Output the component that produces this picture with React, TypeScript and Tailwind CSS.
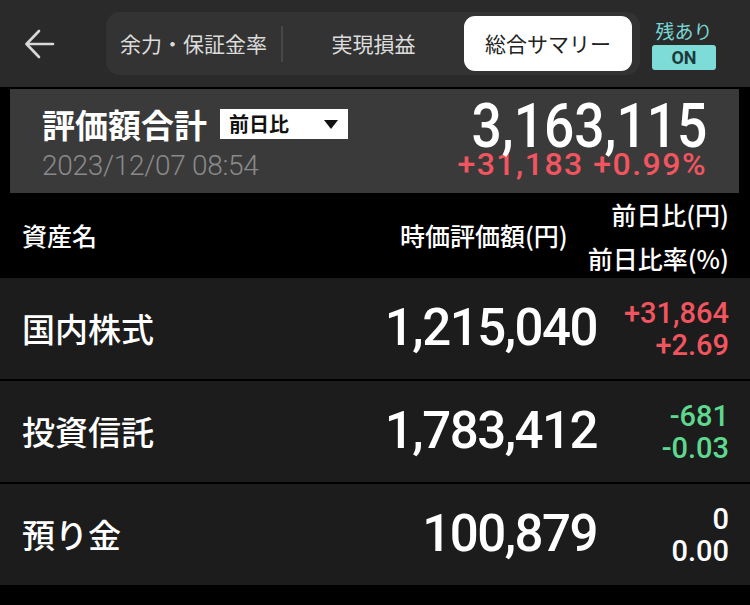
const tabs = ["余力・保証金率", "実現損益", "総合サマリー"];

type Asset = {
  name: string;
  value: string;
  diff: string;
  rate: string;
  tone: "up" | "down" | "flat";
};

const assets: Asset[] = [
  { name: "国内株式", value: "1,215,040", diff: "+31,864", rate: "+2.69", tone: "up" },
  { name: "投資信託", value: "1,783,412", diff: "-681", rate: "-0.03", tone: "down" },
  { name: "預り金", value: "100,879", diff: "0", rate: "0.00", tone: "flat" },
];

const toneClass = {
  up: "text-[#f2555f]",
  down: "text-[#5fd88f]",
  flat: "text-white",
};

function BackArrow() {
  return (
    <svg width="32" height="32" viewBox="0 0 32 32" fill="none" stroke="#d8d8d8" strokeWidth="2.6" strokeLinecap="round" strokeLinejoin="round">
      <path d="M29 16H3" />
      <path d="M15 3L2.5 16L15 29" />
    </svg>
  );
}

export default function App() {
  return (
    <div className="h-[605px] w-[750px] overflow-hidden bg-black font-['Roboto','Noto_Sans_CJK_JP',sans-serif] text-white">
      {/* Top bar */}
      <div className="flex h-[87px] items-center bg-[#2a2a2a]">
        <div className="ml-[24px] flex w-[32px] items-center">
          <BackArrow />
        </div>

        <div className="ml-[50px] flex h-[63px] w-[534px] items-center rounded-[14px] bg-[#333333] font-['Noto_Sans_CJK_JP',sans-serif]">
          <div className="flex w-[175px] justify-center text-[21px] text-[#dcdcdc]">{tabs[0]}</div>
          <div className="h-[36px] w-[2px] bg-[#474747]" />
          <div className="flex flex-1 justify-center text-[21px] text-[#dcdcdc]">{tabs[1]}</div>
          <div className="mr-[8px] flex h-[55px] w-[168px] items-center justify-center rounded-[11px] bg-white text-[21px] text-[#222]">
            {tabs[2]}
          </div>
        </div>

        <div className="ml-[12px] flex w-[64px] flex-col items-center">
          <span className="font-['Noto_Sans_CJK_JP',sans-serif] text-[19px] leading-[26px] text-[#78d8d4]">残あり</span>
          <span className="mt-[1px] flex h-[25px] w-[64px] items-center justify-center rounded-[3px] bg-[#7edcd8] text-[18px] font-bold text-[#1d3a3a]">
            ON
          </span>
        </div>
      </div>

      {/* Total valuation */}
      <div className="ml-[10px] mt-[2px] flex h-[104px] w-[729px] justify-between bg-[#3a3a3a] pl-[32px] pr-[32px]">
        <div className="flex flex-col pt-[18px]">
          <div className="flex items-center">
            <span className="font-['Noto_Sans_CJK_JP',sans-serif] text-[33px] font-bold leading-[34px]">評価額合計</span>
            <span className="ml-[13px] flex h-[30px] w-[128px] items-center justify-between bg-white pl-[9px] pr-[10px]">
              <span className="font-['Noto_Sans_CJK_JP',sans-serif] text-[20px] font-bold text-[#111]">前日比</span>
              <svg width="14" height="9" viewBox="0 0 14 9">
                <path d="M0 0H14L7 9Z" fill="#111" />
              </svg>
            </span>
          </div>
          <span className="mt-[8px] text-[28px] font-light leading-[34px] tracking-[-0.3px] text-[#8a8a8a]">2023/12/07 08:54</span>
        </div>
        <div className="flex flex-col items-end pt-[12px]">
          <span className="inline-block origin-right scale-x-[0.86] text-[62px] font-medium leading-[50px]">3,163,115</span>
          <span className="text-[32px] font-medium leading-[26px] tracking-[1.5px] text-[#f2555f]">+31,183 +0.99%</span>
        </div>
      </div>

      {/* Column header */}
      <div className="flex h-[85px] items-center pl-[22px] pr-[21px] font-['Noto_Sans_CJK_JP',sans-serif] text-[25px] font-medium">
        <span>資産名</span>
        <span className="ml-auto mt-[1px]">時価評価額(円)</span>
        <div className="ml-[20px] flex flex-col items-end leading-[44px]">
          <span>前日比(円)</span>
          <span>前日比率(%)</span>
        </div>
      </div>

      {/* Asset rows */}
      {assets.map((a) => (
        <div key={a.name} className="flex h-[103px] items-center border-b-2 border-black bg-[#1c1c1c] pl-[22px] pr-[21px]">
          <span className="font-['Noto_Sans_CJK_JP',sans-serif] text-[33px] font-medium">{a.name}</span>
          <span className="ml-auto text-[51px] font-medium tracking-[-1.5px]">{a.value}</span>
          <div className={`ml-[20px] flex w-[112px] flex-col items-end text-[29px] font-medium leading-[32px] ${toneClass[a.tone]}`}>
            <span>{a.diff}</span>
            <span>{a.rate}</span>
          </div>
        </div>
      ))}
    </div>
  );
}
